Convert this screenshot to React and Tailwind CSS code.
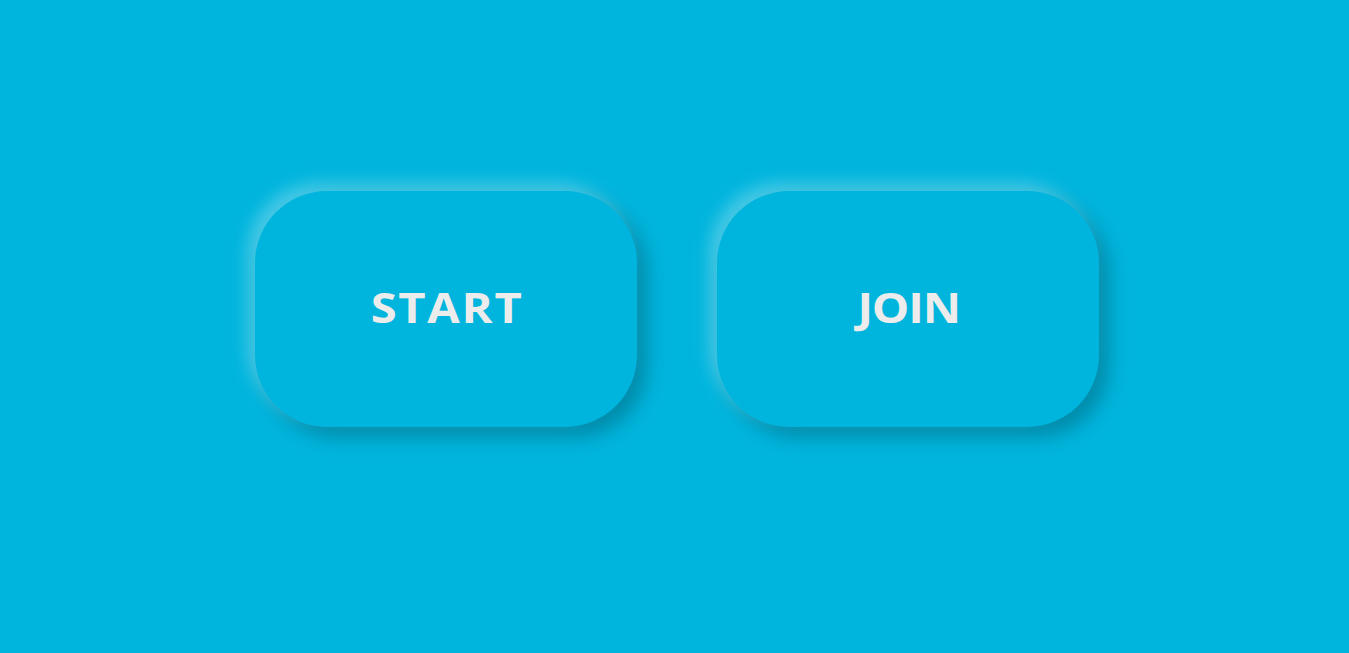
export default function App() {
  const btn =
    "w-[382px] h-[236px] rounded-[72px] bg-[#00b5dd] flex items-center justify-center text-[#ececec] font-bold shadow-[-8px_-8px_16px_rgba(255,255,255,0.28),10px_10px_20px_rgba(0,0,0,0.24)]";
  return (
    <div
      className="min-h-[653px] w-full bg-[#00b5dd] flex justify-center gap-[80px] pt-[191px] pl-[5px]"
      style={{ fontFamily: '"Open Sans", "Liberation Sans", sans-serif' }}
    >
      <button className={btn}>
        <span className="block text-[41px] leading-none -mt-[4px] tracking-[1.5px] pl-[1.5px] scale-x-[1.15]">
          START
        </span>
      </button>
      <button className={btn}>
        <span className="block text-[41px] leading-none -mt-[4px] tracking-[-1px] pl-[1px] scale-x-[1.15]">
          JOIN
        </span>
      </button>
    </div>
  );
}
